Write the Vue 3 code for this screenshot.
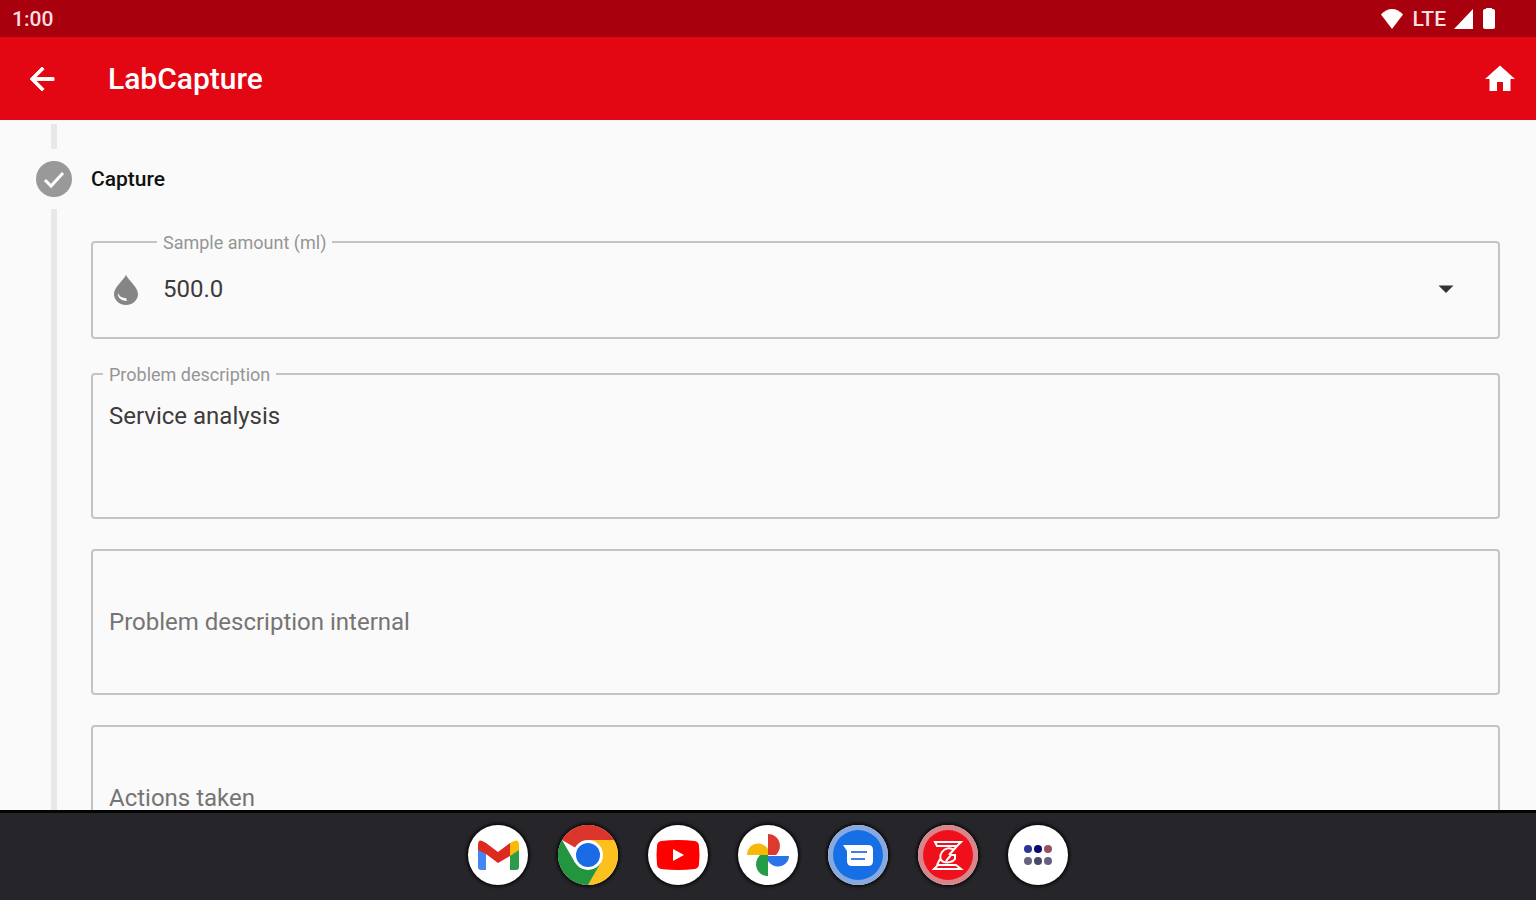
<script setup>
import { reactive, ref } from 'vue'

const amount = ref('500.0')
const amounts = ['100.0', '250.0', '500.0', '1000.0']

const notes = reactive([
    { id: 'problem', label: 'Problem description', text: 'Service analysis' },
    { id: 'internal', label: 'Problem description internal', text: '' },
    { id: 'actions', label: 'Actions taken', text: '' },
])
</script>

<template>
    <div class="screen">
        <div class="status">
            <span>1:00</span>
            <div class="status-icons">
                <svg width="24" height="20" viewBox="0 0 24 20"><path d="M11 0C7 0 3 2 0 5.500L11 20 22 5.500C19 2 15 0 11 0z" /></svg>
                <span>LTE</span>
                <svg width="20" height="20" viewBox="0 0 20 20"><path d="M19 0v20H0z" /></svg>
                <svg width="14" height="22" viewBox="0 0 14 22"><path d="M4 0h6v1h1q2 0 2 2v16q0 2-2 2H3q-2 0-2-2V3q0-2 2-2h1z" /></svg>
            </div>
        </div>

        <header class="appbar">
            <button type="button" aria-label="Back">
                <svg width="36" height="36" viewBox="0 0 24 24"><path d="M20 11H7.830l5.590-5.590L12 4l-8 8 8 8 1.410-1.410L7.830 13H20z" stroke-width="0.600" stroke="#fff" /></svg>
            </button>
            <h1>LabCapture</h1>
            <button type="button" aria-label="Home">
                <svg width="36" height="36" viewBox="0 0 24 24"><path d="M10 20v-6h4v6h5v-8h3L12 3 2 12h3v8z" /></svg>
            </button>
        </header>

        <main>
            <div class="rail">
                <div class="line first"></div>
                <svg width="36" height="36" viewBox="0 0 36 36">
                    <circle cx="18" cy="18" r="18" fill="#999" />
                    <path d="M9 19l6 6L27 12" fill="none" stroke="#fff" stroke-width="3" />
                </svg>
                <div class="line rest"></div>
            </div>

            <form class="step" @submit.prevent>
                <h2>Capture</h2>

                <div class="field select">
                    <svg class="drop" width="24" height="30" viewBox="0 0 24 30">
                        <path d="M12 0C9 6 0 12 0 19a12 11 0 0 0 24 0C24 12 15 6 12 0z" fill="#858585" />
                        <path d="M4 18c1 3 4 5 8 5l1 3C7 26 3 22 4 18z" fill="#fafafa" />
                    </svg>
                    <select id="amount" v-model="amount">
                        <option v-for="a in amounts" :key="a">{{ a }}</option>
                    </select>
                    <label for="amount" class="float">Sample amount (ml)</label>
                    <svg class="caret" width="36" height="36" viewBox="0 0 24 24"><path d="M7 9l5 5 5-5z" fill="#333" /></svg>
                </div>

                <div v-for="n in notes" :key="n.id" class="field">
                    <textarea :id="n.id" v-model="n.text"></textarea>
                    <label :for="n.id" :class="n.text ? 'float' : 'rest-label'">{{ n.label }}</label>
                </div>
            </form>
        </main>

        <nav class="dock">
            <button type="button" aria-label="Gmail">
                <svg viewBox="0 0 60 60">
                    <path d="M10 20l8 5v20h-5q-3 0-3-3z" fill="#4285f4" />
                    <path d="M42 25l9-5v22q0 3-3 3h-6z" fill="#2a9c4a" />
                    <path d="M42 18q9-6 9 2v5l-9 6z" fill="#fbba05" />
                    <path d="M10 20q0-8 8-2l12 9 12-9v13L30 38 18 29l-8-4z" fill="#dd2a20" />
                </svg>
            </button>
            <button type="button" aria-label="Chrome">
                <svg viewBox="0 0 60 60">
                    <path d="M30 30L4 15A30 30 0 0 1 56 15z" fill="#dc352b" />
                    <path d="M30 15h26A30 30 0 0 1 30 60L43 37.500z" fill="#fcc01f" />
                    <path d="M4 15A30 30 0 0 0 30 60L43 37.500 17 37.500z" fill="#23953f" />
                    <circle cx="30" cy="30" r="15" fill="#fff" />
                    <circle cx="30" cy="30" r="12" fill="#1a6be5" />
                </svg>
            </button>
            <button type="button" aria-label="YouTube">
                <svg viewBox="0 0 60 60">
                    <path d="M13 16q17-2 34 0 4 1 4 5 1 9 0 18 0 4-4 5-17 2-34 0-4-1-4-5-1-9 0-18 0-4 4-5z" fill="#f00" />
                    <path d="M25 24l11 6-11 6z" fill="#fff" />
                </svg>
            </button>
            <button type="button" aria-label="Photos">
                <svg viewBox="0 0 60 60">
                    <path d="M30 9v21h8C46 22 41 9 30 9z" fill="#dc3a30" />
                    <path d="M51 31H30v5C37 46 51 41 51 31z" fill="#2d73e8" />
                    <path d="M30 51V30h-8C14 38 19 51 30 51z" fill="#249c48" />
                    <path d="M9 30h21v-6C23 14 9 19 9 30z" fill="#f8b80a" />
                </svg>
            </button>
            <button type="button" aria-label="Messages">
                <svg viewBox="0 0 60 60">
                    <circle cx="30" cy="30" r="30" fill="#87a9df" />
                    <circle cx="30" cy="30" r="25" fill="#176fe6" />
                    <path d="M15 20h25q5 0 5 5v11q0 5-5 5H24q-5 0-5-5V26z" fill="#fff" />
                    <path d="M23 27h16M23 34h14" stroke="#3c80e4" stroke-width="2" />
                </svg>
            </button>
            <button type="button" aria-label="LabCapture">
                <svg viewBox="0 0 60 60">
                    <circle cx="30" cy="30" r="30" fill="#d9848a" />
                    <circle cx="30" cy="30" r="25" fill="#ef101c" />
                    <g fill="none" stroke="#fff" stroke-width="2">
                        <path d="M17 17h26l-4 4H19zM20 40h18l5 4H16z" />
                        <path d="M36 25c-4-3-9-2-12 2s-2 9 2 10 9 0 11-3v-4h-4l-5 6M39 21l-8 9M22 34l-3 6" />
                    </g>
                </svg>
            </button>
            <button type="button" aria-label="All apps">
                <svg viewBox="0 0 60 60">
                    <circle cx="20" cy="24" r="4" fill="#2b3696" />
                    <circle cx="30" cy="24" r="4" fill="#080878" />
                    <circle cx="40" cy="24" r="4" fill="#955064" />
                    <circle cx="20" cy="36" r="4" fill="#66647c" />
                    <circle cx="30" cy="36" r="4" fill="#494868" />
                    <circle cx="40" cy="36" r="4" fill="#626182" />
                </svg>
            </button>
        </nav>
    </div>
</template>

<style>
body {
    margin: 0;
}
</style>

<style scoped>
.screen {
    display: flex;
    flex-direction: column;
    height: 100vh;
    overflow: hidden;
    background: #fafafa;
    color: #333;
    font-family: Roboto, "Liberation Sans", sans-serif;
}

.screen * {
    box-sizing: border-box;
}

svg {
    display: block;
    flex: none;
}

button {
    padding: 0;
    border: 0;
    background: none;
    cursor: pointer;
}

.status {
    display: flex;
    flex: none;
    justify-content: space-between;
    align-items: center;
    height: 37px;
    padding: 0 40px 0 12px;
    background: #a8000c;
    color: #fbdfe0;
    font-size: 21px;
    font-weight: 500;
}

.status-icons {
    display: flex;
    align-items: center;
    gap: 8px;
}

.status svg,
.appbar svg {
    fill: #fff;
}

.appbar {
    display: flex;
    flex: none;
    align-items: center;
    height: 83px;
    padding: 0 18px 0 24px;
    background: #e30613;
    color: #fff;
}

h1 {
    flex: 1;
    margin: 0 0 0 48px;
    font-size: 30px;
    font-weight: 500;
}

main {
    display: grid;
    flex: 1;
    grid-template-columns: 36px 1fr;
    column-gap: 19px;
    min-height: 0;
    padding: 4px 36px 0;
    overflow: hidden;
}

.rail {
    display: flex;
    flex-direction: column;
    align-items: center;
    gap: 12px;
}

.line {
    width: 6px;
    background: #e8e8e8;
}

.first {
    height: 25px;
}

.rest {
    flex: 1;
}

.step {
    display: flex;
    flex-direction: column;
    gap: 30px;
}

h2 {
    margin: 37px 0 14px;
    color: #111;
    font-size: 21px;
    font-weight: 500;
    line-height: 36px;
}

.field {
    position: relative;
    flex: none;
    height: 146px;
    border: 2px solid #c4c4c4;
    border-radius: 4px;
}

.select {
    display: flex;
    align-items: center;
    height: 98px;
    margin-bottom: 4px;
}

.drop {
    margin-left: 21px;
}

select,
textarea {
    display: block;
    width: 100%;
    height: 100%;
    border: 0;
    outline: 0;
    background: none;
    color: #3c3c3c;
    font: 24px/30px Roboto, "Liberation Sans", sans-serif;
}

select {
    padding: 0 90px 2px 25px;
    appearance: none;
}

textarea {
    padding: 26px 16px;
    resize: none;
}

label {
    position: absolute;
    left: 16px;
    pointer-events: none;
}

.float {
    top: -13px;
    left: 10px;
    padding: 0 6px;
    background: #fafafa;
    color: #959595;
    font-size: 18px;
    line-height: 26px;
}

.select .float {
    left: 64px;
}

.rest-label {
    top: 59px;
    color: #757575;
    font-size: 24px;
    line-height: 24px;
}

.caret {
    position: absolute;
    right: 34px;
    pointer-events: none;
}

.dock {
    display: flex;
    flex: none;
    justify-content: center;
    align-items: center;
    gap: 30px;
    height: 90px;
    padding-bottom: 3px;
    border-top: 3px solid #050505;
    background: #26252a;
}

.dock button {
    width: 60px;
    height: 60px;
    border-radius: 50%;
    background: #fff;
    box-shadow: 0 0 3px 2px #0c0c0e;
}
</style>
